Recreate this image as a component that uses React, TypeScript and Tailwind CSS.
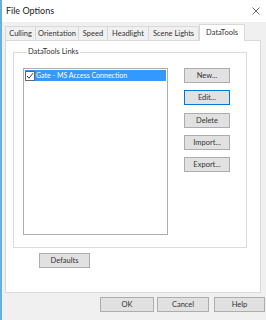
import React from 'react';

const tabs = [
    { label: 'Culling', w: 'w-[31px]' },
    { label: 'Orientation', w: 'w-[44px]' },
    { label: 'Speed', w: 'w-[30px]' },
    { label: 'Headlight', w: 'w-[42px]' },
    { label: 'Scene Lights', w: 'w-[51px]' },
];

const Btn: React.FC<{ label: string; w: string; focused?: boolean }> = ({ label, w, focused }) => (
    <div
        className={`${w} h-[15px] flex items-center justify-center text-[7.5px] text-[#333] bg-[#e1e1e1] border ${focused ? 'border-[#0078d7]' : 'border-[#adadad]'}`}
    >
        {label}
    </div>
);

const App: React.FC = () => {
    return (
        <div
            className="w-[266px] h-[320px] flex bg-[#f0f0f0] border-l-2 border-[#6aaedc] overflow-hidden"
            style={{ fontFamily: 'Lato, "Noto Sans", sans-serif' }}
        >
            <div className="flex-1 flex flex-col">
                {/* Title bar */}
                <div className="h-[22px] bg-white flex items-center justify-between pl-[4px] pr-[5px]">
                    <span className="text-[9px] text-[#222]">File Options</span>
                    <svg width="8" height="8" viewBox="0 0 8 8" className="mr-[1px]">
                        <path d="M0.5 0.5 L7.5 7.5 M7.5 0.5 L0.5 7.5" stroke="#444" strokeWidth="0.8" />
                    </svg>
                </div>

                {/* Tabs */}
                <div className="pl-[3px] flex items-end h-[18px]">
                    {tabs.map((t) => (
                        <div
                            key={t.label}
                            className={`${t.w} h-[14px] flex items-center justify-center whitespace-nowrap text-[7.5px] text-[#333] border border-b-0 border-[#d9d9d9] -mr-px bg-[#f0f0f0]`}
                        >
                            {t.label}
                        </div>
                    ))}
                    <div className="w-[46px] h-[17px] ml-px flex items-center justify-center whitespace-nowrap text-[7.5px] text-[#333] border border-b-0 border-[#d9d9d9] bg-white relative top-px z-10">
                        DataTools
                    </div>
                </div>

                {/* Tab panel */}
                <div className="ml-[3px] w-[256px] h-[253px] bg-white border border-[#d9d9d9] flex flex-col">
                    <fieldset className="ml-[7px] mt-[6px] w-[234px] h-[201px] border border-[#dcdcdc] px-[9px] pt-[11px]">
                        <legend className="text-[7.5px] text-[#333] ml-[4px] px-[1px] leading-[10px]">DataTools Links</legend>
                        <div className="flex">
                            <div className="w-[145px] h-[167px] border border-[#adadad] p-px">
                                <div className="h-[11px] flex items-center bg-[#3399ff]">
                                    <div className="w-[10px] h-[10px] border border-[#666] bg-white flex items-center justify-center">
                                        <svg width="8" height="8" viewBox="0 0 8 8">
                                            <path d="M1 4 L3 6.2 L7 1.2" stroke="#222" strokeWidth="0.9" fill="none" />
                                        </svg>
                                    </div>
                                    <span className="ml-[1px] text-[7px] text-white whitespace-nowrap">Gate - MS Access Connection</span>
                                </div>
                            </div>
                            <div className="ml-[16px] flex flex-col">
                                <Btn label="New..." w="w-[46px]" />
                                <div className="mt-[7px]">
                                    <Btn label="Edit..." w="w-[46px]" focused />
                                </div>
                                <div className="mt-[8px]">
                                    <Btn label="Delete" w="w-[46px]" />
                                </div>
                                <div className="mt-[7px]">
                                    <Btn label="Import..." w="w-[46px]" />
                                </div>
                                <div className="mt-[7px]">
                                    <Btn label="Export..." w="w-[46px]" />
                                </div>
                            </div>
                        </div>
                    </fieldset>
                    <div className="ml-[33px] mt-[5px]">
                        <Btn label="Defaults" w="w-[51px]" />
                    </div>
                </div>

                {/* Bottom buttons */}
                <div className="flex mt-[4px] pl-[98px] gap-[3px]">
                    <Btn label="OK" w="w-[54px]" />
                    <Btn label="Cancel" w="w-[52px]" />
                    <div className="ml-[2px]">
                        <Btn label="Help" w="w-[51px]" />
                    </div>
                </div>
            </div>
        </div>
    );
};

export default App;
